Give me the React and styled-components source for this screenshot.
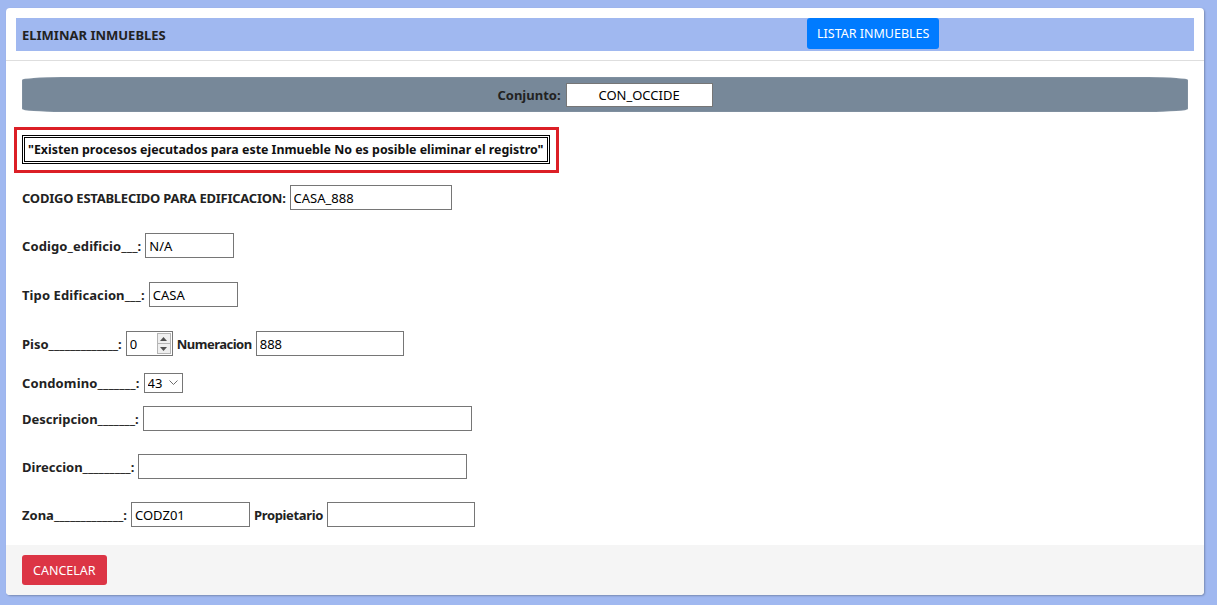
import React from 'react'
import styled, { createGlobalStyle } from 'styled-components'

const Global = createGlobalStyle`
  html, body {
    margin: 0;
    padding: 0;
    background: #a0b8f0;
    font-family: "Noto Sans", "Open Sans", sans-serif;
    color: #212529;
  }
`

const Page = styled.div`
  padding: 8px 13px 9px 6px;
`

const Card = styled.div`
  background: #fff;
  border-radius: 4px;
  box-shadow: 1px 1px 2px rgba(0, 0, 0, 0.25);
  overflow: hidden;
`

const CardHeader = styled.div`
  padding: 10px 10px 9px;
  border-bottom: 1px solid #dedede;
`

const TitleBar = styled.div`
  background: #a0b8f0;
  height: 33px;
  display: grid;
  grid-template-columns: 791px 1fr;
  align-items: center;
`

const Title = styled.h5`
  margin: 0;
  padding-left: 6px;
  font-size: 13px;
  font-weight: 700;
  color: #222;
`

const Button = styled.button`
  font-family: inherit;
  font-size: 12.5px;
  color: #fff;
  background: ${p => p.$red ? '#dc3545' : '#007bff'};
  border: none;
  border-radius: 3px;
  height: ${p => p.$red ? '30px' : '31px'};
  padding: 0 ${p => p.$red ? 11 : 10}px;
  justify-self: start;
  align-self: start;
  cursor: pointer;
`

const CardBody = styled.div`
  padding: 16px 16px 18px;
`

const ConjuntoBar = styled.div`
  background: #778899;
  height: 35px;
  border-radius: 40px / 3px;
  display: flex;
  justify-content: center;
  align-items: center;
  gap: 5px;
  box-shadow: inset 0 0 1px rgba(255, 255, 255, 0.6);
`

const Label = styled.label`
  font-size: 13px;
  font-weight: 700;
  color: #222;
  white-space: pre;
  letter-spacing: ${p => (p.$ls || 0)}px;
`

const Field = styled.input`
  box-sizing: border-box;
  width: ${p => p.$w}px;
  height: ${p => p.$h || 25}px;
  border: 1px solid #767676;
  border-radius: 0;
  padding: 0 3px;
  font-family: inherit;
  font-size: 13px;
  color: #000;
  text-align: ${p => p.$center ? 'center' : 'left'};
  background: #fff;
  outline: none;
`

const NumberBox = styled.div`
  box-sizing: border-box;
  width: 47px;
  height: 25px;
  border: 1px solid #767676;
  display: flex;
  align-items: center;
  padding: 1px 1px 1px 0;
`

const NumberInput = styled.input`
  flex: 1;
  min-width: 0;
  border: none;
  outline: none;
  padding: 0 3px;
  font-family: inherit;
  font-size: 13px;
  color: #000;
  background: transparent;
`

const Spinner = styled.div`
  width: 14px;
  height: 21px;
  display: flex;
  flex-direction: column;
  border: 1px solid #b5b5b5;
  box-sizing: border-box;
  background: #efefef;
`

const SpinHalf = styled.div`
  flex: 1;
  display: flex;
  align-items: center;
  justify-content: center;
  border-top: ${p => p.$down ? '1px solid #b5b5b5' : 'none'};
`

const SelectWrap = styled.div`
  position: relative;
  display: inline-flex;
`

const Select = styled.select`
  appearance: none;
  box-sizing: border-box;
  width: 39px;
  height: 20px;
  border: 1px solid #767676;
  border-radius: 0;
  font-family: inherit;
  font-size: 13px;
  color: #000;
  background: #fff;
  padding: 0 0 0 3px;
  outline: none;
`

const Chevron = styled.svg`
  position: absolute;
  right: 5px;
  top: 7px;
  pointer-events: none;
`

const Alert = styled.div`
  margin: 15px 0 0 -8px;
  width: 545px;
  box-sizing: border-box;
  border: 3px solid #dc1f26;
  padding: 5px 5px 6px;
`

const AlertText = styled.div`
  border: 3px double #000;
  padding: 3px 3px;
  font-size: 12.4px;
  line-height: 17px;
  font-weight: 700;
  color: #111;
  white-space: nowrap;
  width: max-content;
`

const Row = styled.div`
  display: flex;
  align-items: center;
  gap: 4px;
  height: 25px;
  margin-top: ${p => p.$top}px;
`

const CardFooter = styled.div`
  background: #f5f5f5;
  padding: 10px 16px 10px;
`

export default function App() {
  return (
    <Page>
      <Global />
      <Card>
        <CardHeader>
          <TitleBar>
            <Title>ELIMINAR INMUEBLES</Title>
            <Button>LISTAR INMUEBLES</Button>
          </TitleBar>
        </CardHeader>
        <CardBody>
          <ConjuntoBar>
            <Label>Conjunto:</Label>
            <Field $w={147} $h={24} $center defaultValue="CON_OCCIDE" />
          </ConjuntoBar>

          <Alert>
            <AlertText>"Existen procesos ejecutados para este Inmueble No es posible eliminar el registro"</AlertText>
          </Alert>

          <Row $top={12}>
            <Label $ls={-0.24}>CODIGO ESTABLECIDO PARA EDIFICACION:</Label>
            <Field $w={162} defaultValue="CASA_888" />
          </Row>
          <Row $top={23}>
            <Label $ls={0.1}>Codigo_edificio___:</Label>
            <Field $w={89} defaultValue="N/A" />
          </Row>
          <Row $top={24}>
            <Label $ls={0.1}>Tipo Edificacion___:</Label>
            <Field $w={89} defaultValue="CASA" />
          </Row>
          <Row $top={24}>
            <Label>Piso_____________:</Label>
            <NumberBox>
              <NumberInput defaultValue="0" />
              <Spinner>
                <SpinHalf>
                  <svg width="7" height="4" viewBox="0 0 7 4"><path d="M0 4 L3.5 0 L7 4 Z" fill="#505050" /></svg>
                </SpinHalf>
                <SpinHalf $down>
                  <svg width="7" height="4" viewBox="0 0 7 4"><path d="M0 0 L3.5 4 L7 0 Z" fill="#505050" /></svg>
                </SpinHalf>
              </Spinner>
            </NumberBox>
            <Label $ls={-0.5}>Numeracion</Label>
            <Field $w={148} defaultValue="888" />
          </Row>
          <Row $top={14}>
            <Label $ls={0.12}>Condomino_______:</Label>
            <SelectWrap>
              <Select defaultValue="43">
                <option value="43">43</option>
              </Select>
              <Chevron width="9" height="5" viewBox="0 0 9 5">
                <path d="M0.5 0.5 L4.5 4.5 L8.5 0.5" fill="none" stroke="#6d6d6d" strokeWidth="1" />
              </Chevron>
            </SelectWrap>
          </Row>
          <Row $top={11}>
            <Label>Descripcion_______:</Label>
            <Field $w={329} />
          </Row>
          <Row $top={23}>
            <Label>Direccion_________:</Label>
            <Field $w={329} />
          </Row>
          <Row $top={23}>
            <Label>Zona_____________:</Label>
            <Field $w={119} defaultValue="CODZ01" />
            <Label $ls={-0.36}>Propietario</Label>
            <Field $w={148} />
          </Row>
        </CardBody>
        <CardFooter>
          <Button $red>CANCELAR</Button>
        </CardFooter>
      </Card>
    </Page>
  )
}
